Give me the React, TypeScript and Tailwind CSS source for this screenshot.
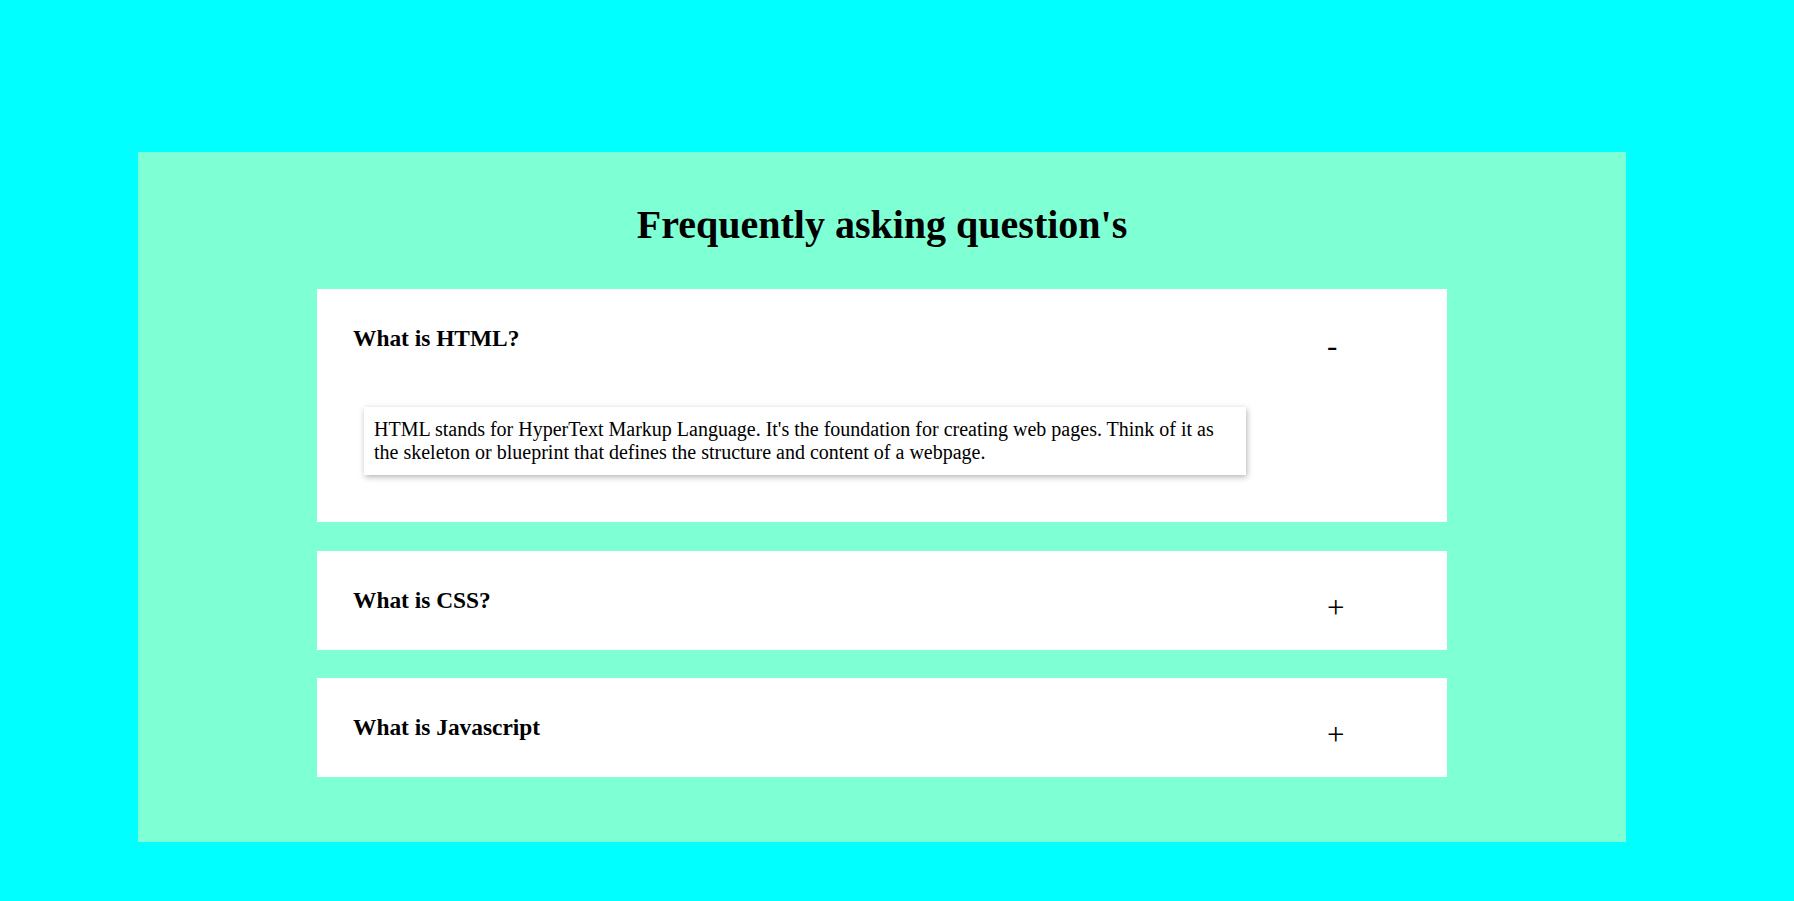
import { useState } from 'react'

const faqs = [
  {
    question: "What is HTML?",
    answer:
      "HTML stands for HyperText Markup Language. It's the foundation for creating web pages. Think of it as the skeleton or blueprint that defines the structure and content of a webpage."
  },
  {
    question: "What is CSS?",
    answer:
      "CSS stands for Cascading Style Sheets. It describes how HTML elements should look on screen: colours, fonts, spacing and layout."
  },
  {
    question: "What is Javascript",
    answer:
      "JavaScript is the programming language of the web. It makes pages interactive, reacting to clicks, input and data."
  }
]

export default function App() {
  const [open, setOpen] = useState<number | null>(0)

  return (
    <div className="min-h-[901px] bg-[#00ffff] pt-[152px] pl-[138px] pb-[56px] font-['Liberation_Serif',serif] text-black">
      <div className="w-[1488px] bg-[#7fffd4] pt-[50px] pb-[65px]">
        <h1 className="text-center text-[40px] font-bold leading-[46px] mb-[41px]">Frequently asking question's</h1>
        <div className="w-[1130px] mx-auto flex flex-col gap-[28.5px]">
          {faqs.map((faq, index) => {
            const isOpen = open === index
            return (
              <div key={index} className="bg-white">
                <div
                  className="flex items-start pt-[36px] pb-[36px] pl-[36px] cursor-pointer"
                  onClick={() => setOpen(isOpen ? null : index)}
                >
                  <h3 className="flex-1 text-[23.4px] font-bold leading-[27px]">{faq.question}</h3>
                  <span className="w-[120px] text-[31px] leading-[12px] pt-[15px]">{isOpen ? '-' : '+'}</span>
                </div>
                {isOpen && (
                  <div className="pl-[47px] pt-[19px] pb-[47px]">
                    <p className="w-[882px] bg-white px-[10px] py-[11px] text-[20px] leading-[23px] shadow-[1px_2px_6px_rgba(0,0,0,0.3)]">
                      {faq.answer}
                    </p>
                  </div>
                )}
              </div>
            )
          })}
        </div>
      </div>
    </div>
  )
}
